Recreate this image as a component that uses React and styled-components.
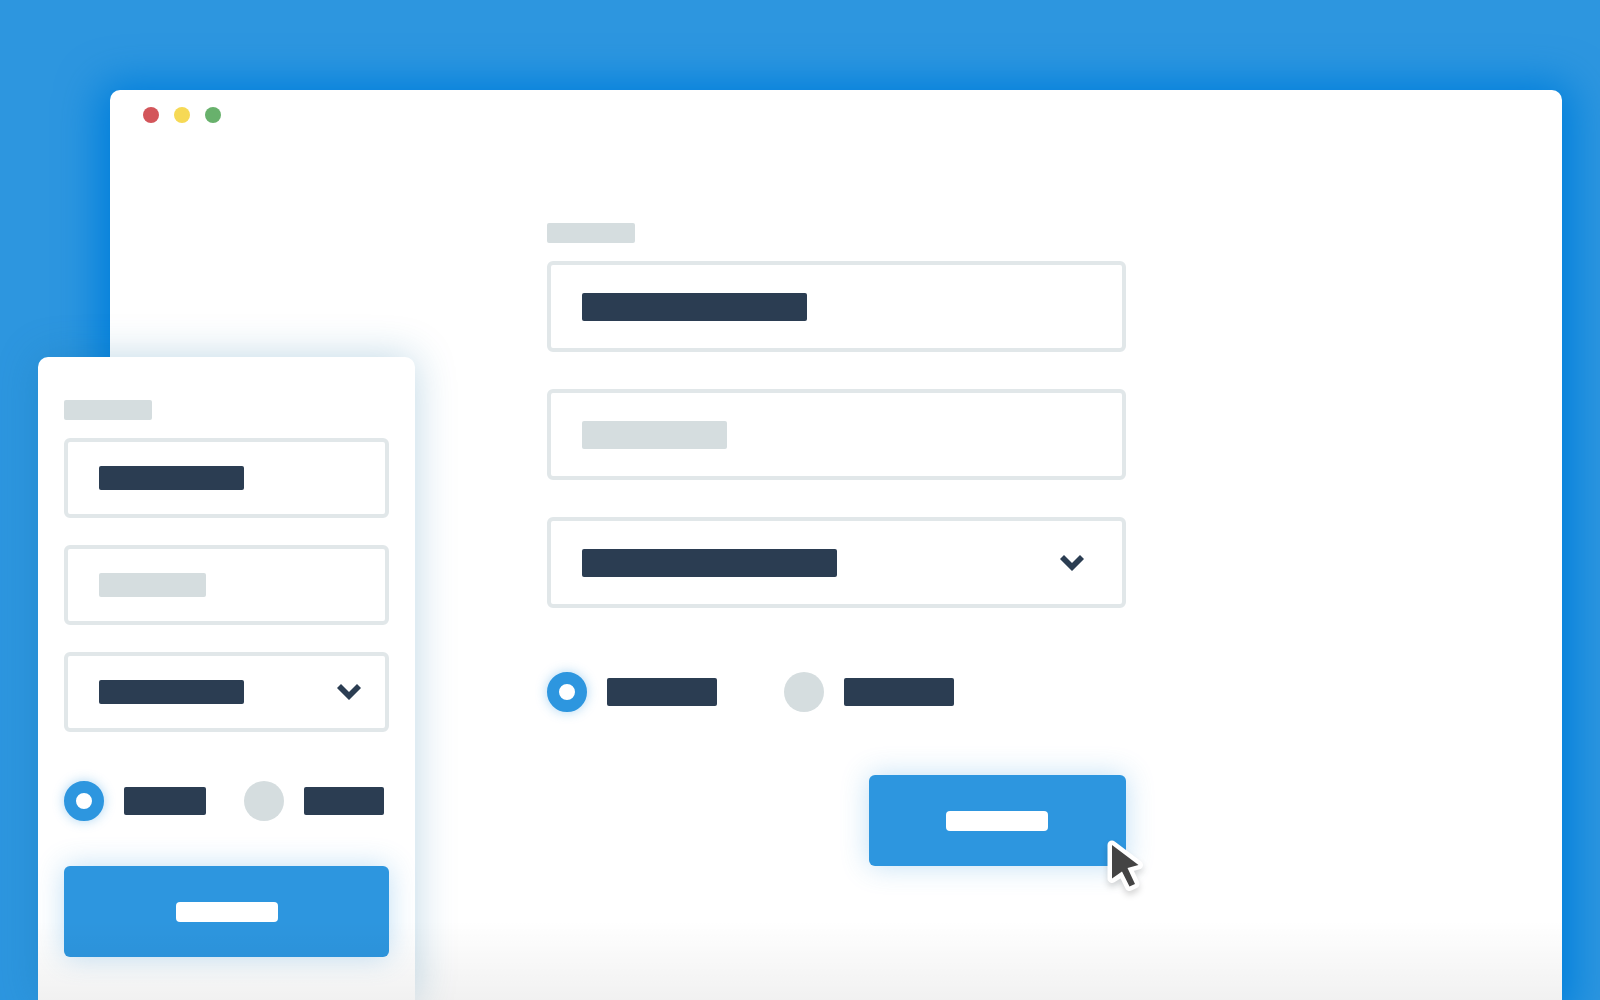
import styled, { createGlobalStyle, css, ThemeProvider } from 'styled-components'

const theme = {
	blue: '#2d96df',
	navy: '#2b3d52',
	grey: '#d5dddf',
	line: '#e1e7e9',
	white: '#ffffff'
}

export default () => (
	<ThemeProvider theme={theme}>
		<GlobalStyle />
		<Page>
			<Browser>
				<TitleBar>
					<Dot $color="#d3555a" />
					<Dot $color="#f6d955" />
					<Dot $color="#68b16c" />
				</TitleBar>
				<DesktopForm onSubmit={e => e.preventDefault()}>
					<Label htmlFor="desktop-name" aria-label="Name">
						<Bar $width={88} $height={20} $color="grey" />
					</Label>
					<Fields>
						<Field>
							<Bar $width={225} $height={28} />
							<TextInput id="desktop-name" type="text" aria-label="Name" />
						</Field>
						<Field>
							<Bar $width={145} $height={28} $color="grey" />
							<TextInput type="text" aria-label="Details" />
						</Field>
						<Field>
							<Bar $width={255} $height={28} />
							<Chevron />
							<Select aria-label="Type" />
						</Field>
					</Fields>
					<Choices>
						<Choice>
							<Radio name="desktop-choice" aria-label="First" defaultChecked />
							<Bar $width={110} $height={28} />
						</Choice>
						<Choice>
							<Radio name="desktop-choice" aria-label="Second" />
							<Bar $width={110} $height={28} />
						</Choice>
					</Choices>
					<Actions>
						<Button type="submit" aria-label="Submit">
							<Bar $width={102} $height={20} $color="white" $radius={4} />
						</Button>
						<Pointer />
					</Actions>
				</DesktopForm>
			</Browser>
			<Phone>
				<PhoneForm onSubmit={e => e.preventDefault()}>
					<Label htmlFor="phone-name" aria-label="Name">
						<Bar $width={88} $height={20} $color="grey" />
					</Label>
					<Fields $small>
						<Field $small>
							<Bar $width={145} $height={24} />
							<TextInput id="phone-name" type="text" aria-label="Name" />
						</Field>
						<Field $small>
							<Bar $width={107} $height={24} $color="grey" />
							<TextInput type="text" aria-label="Details" />
						</Field>
						<Field $small>
							<Bar $width={145} $height={24} />
							<Chevron />
							<Select aria-label="Type" />
						</Field>
					</Fields>
					<Choices $small>
						<Choice>
							<Radio name="phone-choice" aria-label="First" defaultChecked />
							<Bar $width={82} $height={28} />
						</Choice>
						<Choice>
							<Radio name="phone-choice" aria-label="Second" />
							<Bar $width={80} $height={28} />
						</Choice>
					</Choices>
					<Button type="submit" aria-label="Submit" $full>
						<Bar $width={102} $height={20} $color="white" $radius={4} />
					</Button>
				</PhoneForm>
			</Phone>
		</Page>
	</ThemeProvider>
)

const Chevron = () => (
	<ChevronIcon viewBox="0 0 24 16" aria-hidden="true">
		<path d="M4 0 L12 8 L20 0 L24 4 L12 16 L0 4 Z" />
	</ChevronIcon>
)

const Pointer = () => (
	<PointerIcon viewBox="0 0 48 60" aria-hidden="true">
		<path
			d="M10 10 L36.5 30 L25.5 33 L33 49 L27.5 51.5 L20.5 37 L10 43.5 Z"
			fill="#ffffff"
			stroke="#ffffff"
			strokeWidth="9"
			strokeLinejoin="round"
		/>
		<path d="M10 10 L36.5 30 L25.5 33 L33 49 L27.5 51.5 L20 36.5 L10 43.5 Z" fill="#444444" />
	</PointerIcon>
)

const GlobalStyle = createGlobalStyle`
	* {
		box-sizing: border-box;
	}

	body {
		margin: 0;
		font-family: "Open Sans", sans-serif;
	}
`

const Page = styled.div`
	position: relative;
	display: flex;
	min-height: 100vh;
	padding: 90px 38px 0 110px;
	overflow: hidden;
	background: ${props => props.theme.blue};
`

/* soft grey fade along the bottom edge of a panel */
const bottomFade = css`
	&::after {
		content: '';
		position: absolute;
		right: 0;
		bottom: 0;
		left: 0;
		height: 80px;
		background: linear-gradient(rgba(0, 0, 0, 0), rgba(0, 0, 0, 0.055));
		pointer-events: none;
	}
`

const Browser = styled.main`
	position: relative;
	flex: 1;
	background: ${props => props.theme.white};
	border-radius: 10px 10px 0 0;
	box-shadow: 0 4px 40px 12px #007fdb;
	${bottomFade}
`

const TitleBar = styled.div`
	display: flex;
	gap: 15px;
	padding: 17px 33px;
`

const Dot = styled.span`
	width: 16px;
	height: 16px;
	border-radius: 50%;
	background: ${props => props.$color};
`

const DesktopForm = styled.form`
	display: flex;
	flex-direction: column;
	width: 40%;
	min-width: 480px;
	max-width: 579px;
	margin: 83px auto 0;
`

const Phone = styled.section`
	position: absolute;
	top: 357px;
	bottom: 0;
	left: 38px;
	width: 377px;
	padding: 43px 26px;
	background: ${props => props.theme.white};
	border-radius: 10px 10px 0 0;
	box-shadow: 0 0 40px rgba(20, 110, 160, 0.28);
	${bottomFade}
`

const PhoneForm = styled.form`
	display: flex;
	flex-direction: column;
`

const Label = styled.label`
	margin-bottom: 18px;
`

const Bar = styled.span`
	display: block;
	flex: none;
	width: ${props => props.$width}px;
	height: ${props => props.$height}px;
	border-radius: ${props => props.$radius || 2}px;
	background: ${props => props.theme[props.$color || 'navy']};
`

const Fields = styled.div`
	display: flex;
	flex-direction: column;
	gap: ${props => (props.$small ? 27 : 37)}px;
`

const Field = styled.div`
	position: relative;
	display: flex;
	align-items: center;
	justify-content: space-between;
	height: ${props => (props.$small ? 80 : 91)}px;
	padding: 0 ${props => (props.$small ? 24 : 38)}px 0 31px;
	border: 4px solid ${props => props.theme.line};
	border-radius: 6px;
`

/* the control covers the whole field, the bars show through it */
const control = css`
	position: absolute;
	inset: 0;
	width: 100%;
	height: 100%;
	padding: 0 31px;
	border: 0;
	appearance: none;
	background: transparent;
	font: inherit;
`

const TextInput = styled.input`
	${control}
`

const Select = styled.select`
	${control}
	cursor: pointer;
`

const ChevronIcon = styled.svg`
	width: 24px;
	height: 16px;
	fill: ${props => props.theme.navy};
`

const Choices = styled.div`
	display: flex;
	gap: ${props => (props.$small ? 38 : 67)}px;
	margin: ${props => (props.$small ? '49px 0 45px' : '64px 0 63px')};
`

const Choice = styled.label`
	display: flex;
	align-items: center;
	gap: 20px;
`

const Radio = styled.input.attrs({ type: 'radio' })`
	width: 40px;
	height: 40px;
	margin: 0;
	border-radius: 50%;
	appearance: none;
	background: ${props => props.theme.grey};

	&:checked {
		border: 12px solid ${props => props.theme.blue};
		background: ${props => props.theme.white};
		box-shadow: 0 0 12px rgba(45, 150, 223, 0.4);
	}
`

const Actions = styled.div`
	position: relative;
	align-self: flex-end;
`

const Button = styled.button`
	display: flex;
	align-items: center;
	justify-content: center;
	width: ${props => (props.$full ? '100%' : '257px')};
	height: 91px;
	border: 0;
	border-radius: 6px;
	background: ${props => props.theme.blue};
	box-shadow: 0 0 28px rgba(45, 150, 223, 0.3);
	cursor: pointer;
`

const PointerIcon = styled.svg`
	position: absolute;
	right: -24px;
	bottom: -29px;
	width: 48px;
	height: 60px;
	filter: drop-shadow(0 4px 3px rgba(0, 0, 0, 0.16));
	pointer-events: none;
`
